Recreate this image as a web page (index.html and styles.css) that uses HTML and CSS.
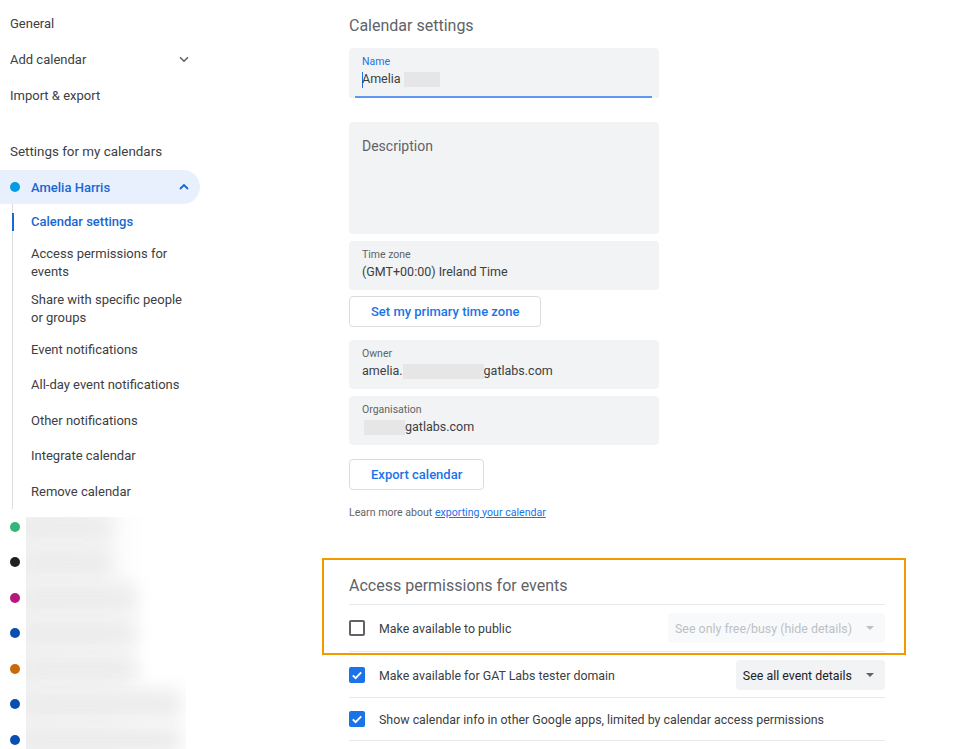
FILE: index.html
```html
<!DOCTYPE html>
<html lang="en">
<head>
    <meta charset="UTF-8">
    <meta name="viewport" content="width=device-width, initial-scale=1.0">
    <title>Settings - Calendar</title>
    <link rel="stylesheet" href="styles.css">
</head>
<body>
    <div class="page">
        <nav class="sidebar">
            <div class="nav-item">General</div>
            <div class="nav-item">
                <span>Add calendar</span>
                <svg class="chevron" viewBox="0 0 12 12"><path d="M2 4.2l4 4 4-4" fill="none" stroke="#5f6368" stroke-width="1.6"/></svg>
            </div>
            <div class="nav-item">Import &amp; export</div>

            <div class="nav-title">Settings for my calendars</div>
            <div class="cal-item">
                <span class="dot dot-sky"></span>
                <span class="cal-name">Amelia Harris</span>
                <svg class="chevron" viewBox="0 0 12 12"><path d="M2 8l4-4 4 4" fill="none" stroke="#1967d2" stroke-width="1.8"/></svg>
            </div>
            <div class="sub-list">
                <div class="sub-item current">Calendar settings</div>
                <div class="sub-item">Access permissions for events</div>
                <div class="sub-item">Share with specific people or groups</div>
                <div class="sub-item">Event notifications</div>
                <div class="sub-item">All-day event notifications</div>
                <div class="sub-item">Other notifications</div>
                <div class="sub-item">Integrate calendar</div>
                <div class="sub-item">Remove calendar</div>
            </div>

            <div class="other-cals">
                <div class="dot-col">
                    <div class="dot-row"><span class="dot dot-green"></span></div>
                    <div class="dot-row"><span class="dot dot-black"></span></div>
                    <div class="dot-row"><span class="dot dot-pink"></span></div>
                    <div class="dot-row"><span class="dot dot-blue"></span></div>
                    <div class="dot-row"><span class="dot dot-orange"></span></div>
                    <div class="dot-row"><span class="dot dot-blue"></span></div>
                    <div class="dot-row"><span class="dot dot-blue"></span></div>
                </div>
                <div class="blur-col">
                    <div class="blob w1"></div>
                    <div class="blob w1"></div>
                    <div class="blob w2"></div>
                    <div class="blob w2"></div>
                    <div class="blob w2"></div>
                    <div class="blob w3"></div>
                    <div class="blob w3"></div>
                </div>
            </div>
        </nav>

        <main class="main">
            <h1 class="page-title">Calendar settings</h1>

            <div class="field name-field">
                <div class="name-inner">
                    <div class="field-label">Name</div>
                    <div class="field-value"><span class="caret"></span>Amelia <span class="redact r-name"></span></div>
                </div>
                <div class="underline"></div>
            </div>

            <div class="field desc-field">Description</div>

            <div class="field">
                <div class="field-label">Time zone</div>
                <div class="field-value">(GMT+00:00) Ireland Time</div>
            </div>

            <div class="btn-row tz-row">
                <button class="btn">Set my primary time zone</button>
            </div>

            <div class="field">
                <div class="field-label">Owner</div>
                <div class="field-value">amelia.<span class="redact r-owner"></span>gatlabs.com</div>
            </div>

            <div class="field">
                <div class="field-label">Organisation</div>
                <div class="field-value"><span class="redact r-org"></span>gatlabs.com</div>
            </div>

            <div class="btn-row export-row">
                <button class="btn">Export calendar</button>
            </div>

            <p class="learn-more">Learn more about <a href="#">exporting your calendar</a></p>

            <div class="highlight">
                <h2 class="section-title">Access permissions for events</h2>
                <div class="perm-row first">
                    <span class="checkbox"></span>
                    <span class="perm-label">Make available to public</span>
                    <div class="select disabled">
                        <span>See only free/busy (hide details)</span>
                        <svg class="arrow" viewBox="0 0 8 4"><path d="M0 0h8L4 4z" fill="#bdc1c6"/></svg>
                    </div>
                </div>
            </div>

            <div class="perm-row second">
                <svg class="checkbox-on" viewBox="0 0 16 16"><rect width="16" height="16" rx="2" fill="#1a73e8"/><path d="M3.8 8.3l2.8 2.8 5.6-5.8" fill="none" stroke="#fff" stroke-width="1.9"/></svg>
                <span class="perm-label">Make available for GAT Labs tester domain</span>
                <div class="select">
                    <span>See all event details</span>
                    <svg class="arrow" viewBox="0 0 8 4"><path d="M0 0h8L4 4z" fill="#5f6368"/></svg>
                </div>
            </div>

            <div class="perm-row third">
                <svg class="checkbox-on" viewBox="0 0 16 16"><rect width="16" height="16" rx="2" fill="#1a73e8"/><path d="M3.8 8.3l2.8 2.8 5.6-5.8" fill="none" stroke="#fff" stroke-width="1.9"/></svg>
                <span class="perm-label">Show calendar info in other Google apps, limited by calendar access permissions</span>
            </div>
        </main>
    </div>
</body>
</html>
```

FILE: styles.css
```css
html, body {
    height: 100%;
}
body {
    margin: 0;
    font-family: Roboto, "Noto Sans", Arial, sans-serif;
    color: #3c4043;
    background: #fff;
    overflow: hidden;
}
.page {
    display: flex;
    align-items: flex-start;
}

/* sidebar */
.sidebar {
    width: 200px;
    flex-shrink: 0;
    padding-top: 5px;
    font-size: 13px;
}
.nav-item {
    display: flex;
    align-items: center;
    justify-content: space-between;
    height: 36px;
    padding: 0 10px;
}
.chevron {
    width: 12px;
    height: 12px;
}
.nav-title {
    margin: 30px 0 9px;
    padding-left: 10px;
    line-height: 18px;
    font-size: 13.4px;
}
.cal-item {
    display: flex;
    align-items: center;
    height: 34px;
    padding: 0 10px;
    background: #e8f0fe;
    border-radius: 0 17px 17px 0;
    color: #1967d2;
    font-weight: 500;
}
.cal-name {
    flex: 1;
}
.dot {
    display: block;
    width: 10px;
    height: 10px;
    border-radius: 50%;
    margin-right: 11px;
    flex-shrink: 0;
}
.dot-sky { background: #039be5; }
.dot-green { background: #33b679; }
.dot-black { background: #202124; }
.dot-pink { background: #b5177a; }
.dot-blue { background: #0b4db0; }
.dot-orange { background: #c8690a; }

.sub-list {
    margin: 9px 17px 9px 12px;
    border-left: 1px solid #dadce0;
    padding-left: 18px;
}
.sub-item {
    position: relative;
    display: flex;
    align-items: center;
    min-height: 35.5px;
    padding: 5.5px 0;
    box-sizing: border-box;
    line-height: 17.5px;
}
.sub-item:first-child {
    margin-top: -9px;
}
.sub-item:last-child {
    margin-bottom: -9px;
}
.sub-item.current {
    color: #1967d2;
    font-weight: 500;
}
.sub-item.current::before {
    content: "";
    position: absolute;
    left: -19px;
    top: 9px;
    bottom: 9px;
    width: 2px;
    background: #1967d2;
}

.other-cals {
    display: flex;
    margin-top: -1px;
}
.dot-col {
    padding-left: 10px;
    width: 10px;
}
.dot-row {
    display: flex;
    align-items: center;
    height: 35.5px;
}
.blur-col {
    margin: 7.5px 0 0 6px;
    width: 160px;
    height: 240px;
    overflow: hidden;
    background: linear-gradient(to right, #f7f7f7 0, #f9f9f9 45%, #fff 75%);
}
.blob {
    height: 30px;
    margin: 0 0 5.5px -14px;
    background: #ececec;
    border-radius: 10px;
    filter: blur(9px);
}
.blob:first-child {
    margin-top: -5px;
}
.w1 { width: 100px; }
.w2 { width: 125px; }
.w3 { width: 170px; }

/* main column */
.main {
    margin-left: 149px;
    width: 536px;
    padding-top: 16px;
}
.page-title,
.section-title {
    margin: 0 0 12px;
    font-size: 16px;
    line-height: 20px;
    font-weight: 400;
    color: #5f6368;
}
.field {
    width: 310px;
    box-sizing: border-box;
    background: #f1f3f4;
    border-radius: 4px;
    padding: 7px 13px 9px;
    margin-bottom: 7px;
}
.field-label {
    font-size: 10.5px;
    line-height: 13px;
    color: #5f6368;
}
.field-value {
    margin-top: 2px;
    font-size: 12.5px;
    line-height: 18px;
    color: #3c4043;
}
.name-field {
    padding: 7px 7px 0 6px;
    border-radius: 4px 4px 0 0;
    margin-bottom: 24px;
}
.name-inner {
    padding: 0 7px 8px;
}
.name-field .field-label {
    color: #1a73e8;
}
.underline {
    height: 2px;
    background: #5e97f6;
}
.caret {
    display: inline-block;
    width: 0;
    height: 16px;
    border-left: 1.5px solid #1a73e8;
    vertical-align: middle;
    margin-right: -1px;
}
.redact {
    display: inline-block;
    height: 15px;
    background: #e6e6e6;
    vertical-align: middle;
    filter: blur(0.6px);
}
.r-name {
    width: 36px;
}
.r-owner {
    width: 81px;
}
.r-org {
    width: 41px;
    margin-left: 2px;
}
.desc-field {
    height: 112px;
    padding-top: 14px;
    font-size: 14px;
    line-height: 20px;
    color: #5f6368;
}
.btn-row {
    margin-bottom: 13px;
}
.tz-row {
    margin-top: -1px;
}
.export-row {
    margin-top: 14px;
    margin-bottom: 0;
}
.btn {
    height: 31px;
    padding: 0 21px;
    border: 1px solid #dadce0;
    border-radius: 4px;
    background: #fff;
    font-family: inherit;
    font-size: 13px;
    font-weight: 500;
    color: #1a73e8;
    cursor: pointer;
}
.learn-more {
    margin: 15.5px 0 0;
    font-size: 10.6px;
    line-height: 14px;
    color: #5f6368;
}
.learn-more a {
    color: #1a73e8;
}

/* access permissions */
.highlight {
    margin: 38.5px -21px 0 -27px;
    border: 2px solid #f29900;
    padding: 16px 19px 1px 25px;
}
.section-title {
    margin-bottom: 8px;
}
.perm-row {
    display: flex;
    align-items: center;
    box-sizing: border-box;
    border-bottom: 1px solid #e8eaed;
    font-size: 12.4px;
    color: #3c4043;
}
.perm-row.first {
    min-height: 48px;
    border-top: 1px solid #e8eaed;
}
.perm-row.second {
    min-height: 43px;
    padding-bottom: 2px;
}
.perm-row.third {
    min-height: 43px;
}
.checkbox {
    width: 16px;
    height: 16px;
    box-sizing: border-box;
    border: 2px solid #5f6368;
    border-radius: 2px;
    margin-right: 14px;
    flex-shrink: 0;
}
.checkbox-on {
    width: 16px;
    height: 16px;
    margin-right: 14px;
    flex-shrink: 0;
}
.perm-label {
    flex: 1;
}
.select {
    display: flex;
    align-items: center;
    height: 30px;
    padding: 0 11px 0 7px;
    border-radius: 4px;
    background: #f1f3f4;
    color: #202124;
}
.select.disabled {
    background: #f8f9fa;
    color: #bdc1c6;
}
.arrow {
    width: 8px;
    height: 4px;
    margin-left: 14px;
}
```
